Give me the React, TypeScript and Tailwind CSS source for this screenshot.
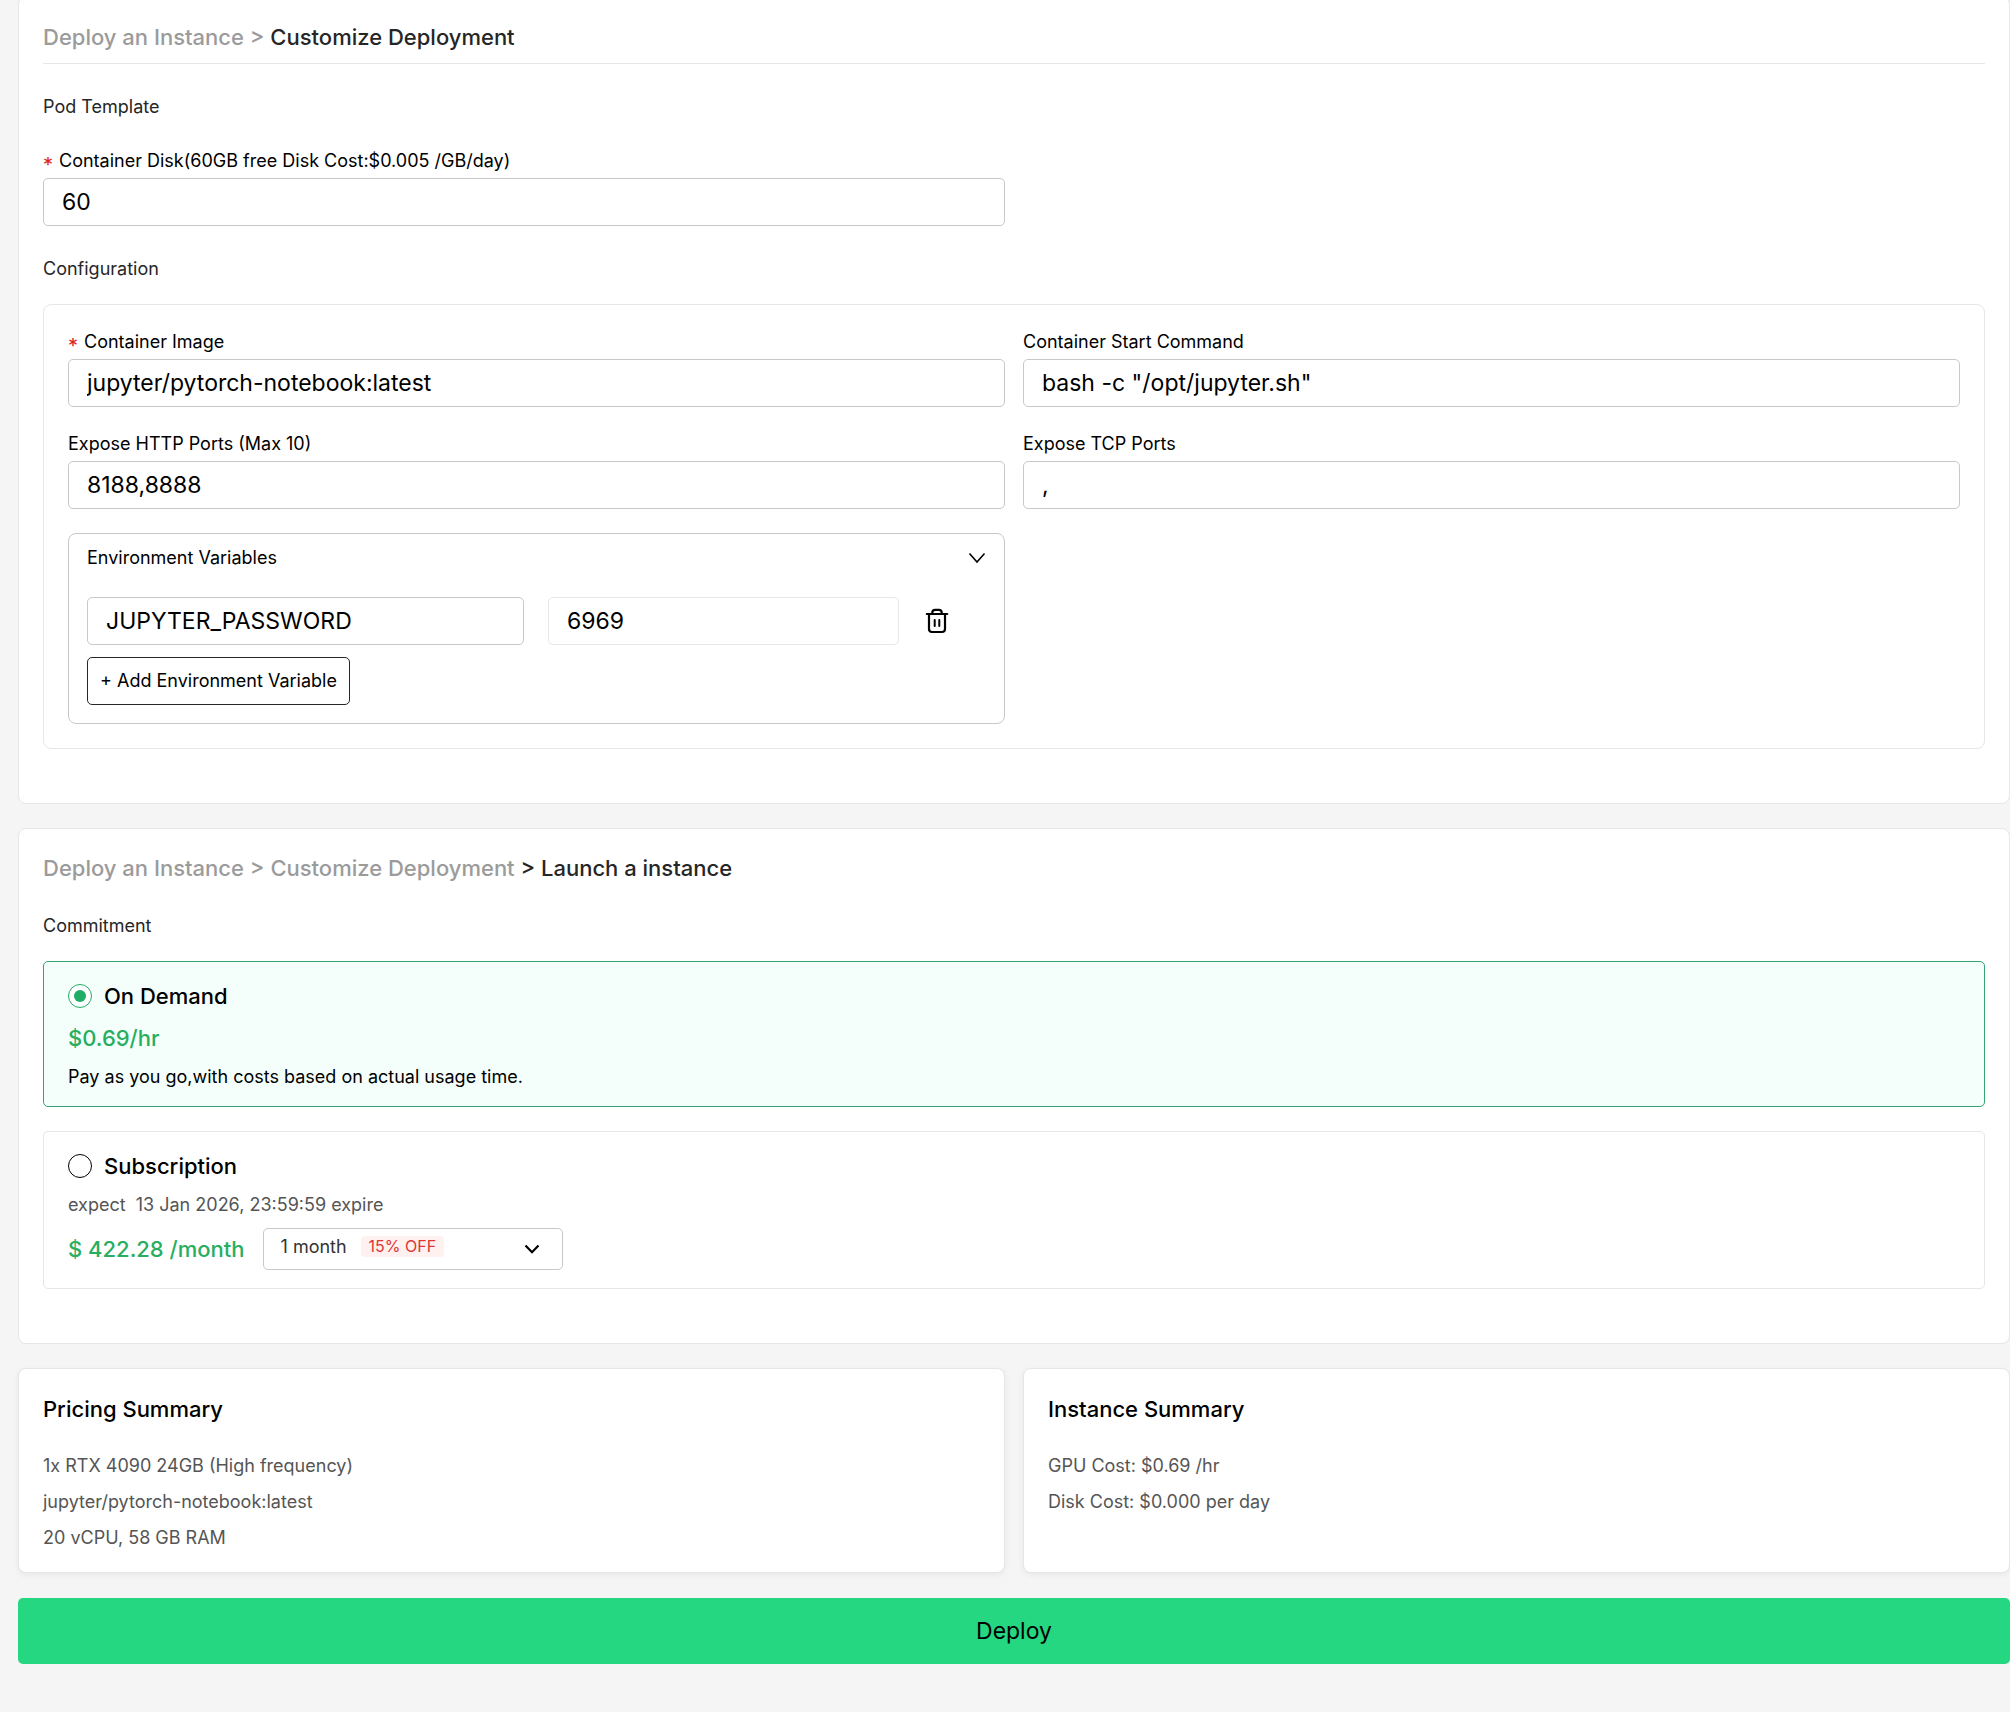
import { useId, useState } from "react";
import type { ReactNode } from "react";

const card = "rounded-lg border border-[#e6e6e6] bg-white px-6";
const field =
  "h-12 w-full min-w-0 rounded-[5px] border border-[#c8c8c8] bg-white px-[18px] text-[23px] text-black outline-none focus:border-[#27ae60]";

function Field({ label, value, required }: { label: string; value: string; required?: boolean }) {
  const id = useId();
  return (
    <div>
      <label htmlFor={id} className="mb-[3px] flex h-7 text-lg leading-7 text-black">
        {required && (
          <span aria-hidden="true" className="mr-1.5 text-xl leading-9 text-[#e02020]">
            *
          </span>
        )}
        {label}
      </label>
      <input id={id} type="text" defaultValue={value} required={required} className={field} />
    </div>
  );
}

function SectionTitle({ children }: { children: ReactNode }) {
  return <h3 className="text-lg leading-7 text-[#262626]">{children}</h3>;
}

function TrashIcon() {
  return (
    <svg width="24" height="26" viewBox="0 0 24 26" fill="none" stroke="currentColor" strokeWidth="2.2" strokeLinecap="round" aria-hidden="true">
      <path d="M1.8 6h20.4" />
      <path d="M4 6v15a3 3 0 0 0 3 3h10a3 3 0 0 0 3-3V6" />
      <path d="M7.3 6V4.6A2.8 2.8 0 0 1 10.1 1.8h3.8a2.8 2.8 0 0 1 2.8 2.8V6" />
      <path d="M9.7 12v6M14.3 12v6" strokeWidth="2" />
    </svg>
  );
}

function Radio({ id, checked, onChange }: { id: string; checked: boolean; onChange: () => void }) {
  return (
    <input
      id={id}
      type="radio"
      name="commitment"
      checked={checked}
      onChange={onChange}
      className="grid size-6 shrink-0 appearance-none place-items-center rounded-full border border-black bg-white before:size-3 before:rounded-full checked:border-[#1fae63] checked:before:bg-[#1fae63]"
    />
  );
}

export default function App() {
  const [plan, setPlan] = useState("demand");
  const [open, setOpen] = useState(true);
  const planBox = (active: boolean) =>
    active
      ? "rounded-[5px] border border-[#35a374] bg-[#f4fffb] px-6"
      : "rounded-[5px] border border-[#e6e6e6] bg-white px-6";

  return (
    <main className="min-h-screen bg-[#f5f5f5] pb-12 pl-[18px] font-['Inter',sans-serif] text-black">
      <section className={`${card} -mt-1 pt-6 pb-[54px]`}>
        <h2 className="border-b border-[#e6e6e6] pb-[10px] text-[22px] leading-8 font-medium text-[#262626]">
          <a href="#instance" className="text-[#9b9b9b]">Deploy an Instance &gt;</a> Customize Deployment
        </h2>
        <div className="mt-[29px]">
          <SectionTitle>Pod Template</SectionTitle>
        </div>
        <div className="mt-[26px] grid grid-cols-2 gap-[18px]">
          <Field label="Container Disk(60GB free Disk Cost:$0.005 /GB/day)" value="60" required />
        </div>
        <div className="mt-[29px]">
          <SectionTitle>Configuration</SectionTitle>
        </div>
        <div className="mt-[21px] rounded-lg border border-[#e6e6e6] px-6 pt-[23px] pb-6">
          <div className="grid grid-cols-2 gap-x-[18px] gap-y-[23px]">
            <Field label="Container Image" value="jupyter/pytorch-notebook:latest" required />
            <Field label="Container Start Command" value={'bash -c "/opt/jupyter.sh"'} />
            <Field label="Expose HTTP Ports (Max 10)" value="8188,8888" />
            <Field label="Expose TCP Ports" value="," />
          </div>
          <div className="mt-6 grid grid-cols-2 gap-[18px]">
            <div className="rounded-lg border border-[#c8c8c8] px-[18px] pt-[10px] pb-[18px]">
              <button
                type="button"
                aria-expanded={open}
                onClick={() => setOpen(!open)}
                className="flex w-full items-center justify-between text-lg leading-7"
              >
                Environment Variables
                <svg width="18" height="12" viewBox="0 0 18 12" fill="none" stroke="currentColor" strokeWidth="1.6" aria-hidden="true">
                  <path d="M1.5 1.5 9 10l7.5-8.5" />
                </svg>
              </button>
              {open && (
                <>
                  <div className="mt-[25px] grid grid-cols-[437fr_351fr_63px] gap-6">
                    <input type="text" aria-label="Variable name" defaultValue="JUPYTER_PASSWORD" className={field} />
                    <input
                      type="text"
                      aria-label="Variable value"
                      defaultValue="6969"
                      className="h-12 w-full min-w-0 rounded-[5px] border border-[#e6e6e6] bg-white px-[18px] text-[23px] outline-none"
                    />
                    <button type="button" aria-label="Delete variable" className="flex items-center pl-0.5">
                      <TrashIcon />
                    </button>
                  </div>
                  <button
                    type="button"
                    className="mt-3 h-12 rounded-[5px] border border-[#262626] px-3 text-lg leading-7"
                  >
                    + Add Environment Variable
                  </button>
                </>
              )}
            </div>
          </div>
        </div>
      </section>

      <section className={`${card} mt-6 pt-[23px] pb-[54px]`}>
        <h2 className="text-[22px] leading-8 font-medium text-[#262626]">
          <a href="#instance" className="text-[#9b9b9b]">Deploy an Instance &gt;</a>{" "}
          <a href="#customize" className="text-[#9b9b9b]">Customize Deployment</a> &gt; Launch a instance
        </h2>
        <div className="mt-7">
          <SectionTitle>Commitment</SectionTitle>
        </div>

        <div className={`mt-[21px] pt-[18px] pb-[15px] ${planBox(plan === "demand")}`}>
          <div className="flex items-center gap-3">
            <Radio id="demand" checked={plan === "demand"} onChange={() => setPlan("demand")} />
            <label htmlFor="demand" className="text-[22px] leading-8 font-medium">On Demand</label>
          </div>
          <p className="mt-[10px] text-[22px] leading-8 font-medium text-[#27ae60]">$0.69/hr</p>
          <p className="mt-[9px] text-lg leading-7">Pay as you go,with costs based on actual usage time.</p>
        </div>

        <div className={`mt-6 pt-[18px] pb-[18px] ${planBox(plan === "subscription")}`}>
          <div className="flex items-center gap-3">
            <Radio id="subscription" checked={plan === "subscription"} onChange={() => setPlan("subscription")} />
            <label htmlFor="subscription" className="text-[22px] leading-8 font-medium">Subscription</label>
          </div>
          <p className="mt-[9px] text-lg leading-7 whitespace-pre text-[#555]">expect  13 Jan 2026, 23:59:59 expire</p>
          <div className="mt-[9px] flex items-center gap-[18px]">
            <p className="text-[22px] leading-8 font-medium text-[#27ae60]">$ 422.28 /month</p>
            <div className="relative">
              <select
                aria-label="Subscription length"
                className="block h-[42px] w-[300px] appearance-none rounded-[5px] border border-[#c8c8c8] bg-white pr-3 pb-1 pl-[17px] text-lg leading-7 text-[#333]"
              >
                <option>1 month</option>
              </select>
              <span className="pointer-events-none absolute top-2 left-[98px] rounded bg-[#fff1f0] px-2 text-base leading-[21px] text-[#e03535]">
                15% OFF
              </span>
              <svg
                className="pointer-events-none absolute top-4 right-[22px]"
                width="18"
                height="11"
                viewBox="0 0 18 11"
                fill="none"
                stroke="currentColor"
                strokeWidth="2.2"
                aria-hidden="true"
              >
                <path d="M2.5 1.5 9 8.2l6.500-6.700" />
              </svg>
            </div>
          </div>
        </div>
      </section>

      <div className="mt-6 grid grid-cols-2 gap-[18px]">
        <section className={`${card} pt-6 pb-4 shadow-[0_2px_6px_rgba(0,0,0,0.06)]`}>
          <h2 className="text-[22px] leading-8 font-medium">Pricing Summary</h2>
          <div className="mt-[23px] text-lg leading-9 text-[#555]">
            <p>1x RTX 4090 24GB (High frequency)</p>
            <p>jupyter/pytorch-notebook:latest</p>
            <p>20 vCPU, 58 GB RAM</p>
          </div>
        </section>
        <section className={`${card} pt-6 pb-4 shadow-[0_2px_6px_rgba(0,0,0,0.06)]`}>
          <h2 className="text-[22px] leading-8 font-medium">Instance Summary</h2>
          <div className="mt-[23px] text-lg leading-9 text-[#555]">
            <p>GPU Cost: $0.69 /hr</p>
            <p>Disk Cost: $0.000 per day</p>
          </div>
        </section>
      </div>

      <button type="button" className="mt-[25px] h-[66px] w-full rounded-[5px] bg-[#24d780] text-[23px]">
        Deploy
      </button>
    </main>
  );
}
